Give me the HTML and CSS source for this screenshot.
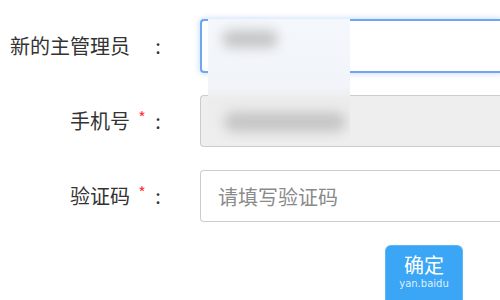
FILE: index.html
```html
<!DOCTYPE html>
<html lang="zh-CN">
<head>
<meta charset="utf-8">
<link rel="stylesheet" href="styles.css">
</head>
<body>
<div class="form">
  <div class="row">
    <div class="label"><span class="text">新的主管理员</span><span class="star"></span><span class="colon">:</span></div>
    <div class="input focused"></div>
  </div>
  <div class="row">
    <div class="label"><span class="text">手机号</span><span class="star">*</span><span class="colon">:</span></div>
    <div class="input disabled"></div>
  </div>
  <div class="row">
    <div class="label"><span class="text">验证码</span><span class="star">*</span><span class="colon">:</span></div>
    <div class="input"><span class="placeholder">请填写验证码</span></div>
  </div>
  <div class="actions">
    <button class="btn"><span class="btn-text">确定</span><span class="mark">yan.baidu</span></button>
  </div>
  <div class="mask">
    <div class="blob blob1"></div>
    <div class="blob blob2"></div>
  </div>
</div>
</body>
</html>
```
FILE: styles.css
```css
html, body {
  margin: 0;
  padding: 0;
  background: #fff;
  overflow: hidden;
  width: 500px;
  height: 300px;
}
body {
  font-family: "Noto Sans CJK SC", "Noto Sans", sans-serif;
  color: #333;
}
.form {
  position: relative;
  padding-top: 19px;
}
.row {
  display: flex;
  align-items: center;
  margin-bottom: 23px;
}
.row:first-child {
  margin-bottom: 22px;
}
.label {
  flex: 0 0 200px;
  width: 200px;
  box-sizing: border-box;
  padding-left: 10px;
  display: flex;
  align-items: center;
  font-size: 20px;
  line-height: 28px;
}
.text {
  width: 120px;
  text-align: right;
}
.star {
  width: 24px;
  text-align: center;
  color: #f33;
  font-size: 16px;
  line-height: 16px;
  align-self: flex-start;
  padding-top: 2px;
}
.colon {
  width: 8px;
  text-align: center;
}
.input {
  flex: 0 0 302px;
  width: 302px;
  height: 52px;
  box-sizing: border-box;
  border: 1px solid #ccc;
  border-right: 0;
  border-radius: 4px 0 0 4px;
  background: #fff;
  display: flex;
  align-items: center;
  padding-left: 17px;
}
.input.focused {
  height: 54px;
  border: 2px solid #6ea6f0;
  border-right: 0;
  box-shadow: 0 0 6px rgba(102, 160, 240, 0.45);
}
.input.disabled {
  background: #eee;
}
.placeholder {
  font-size: 20px;
  color: #8a8a8a;
}
.actions {
  padding-left: 385px;
}
.btn {
  position: relative;
  width: 78px;
  height: 55px;
  border: 1px solid #5fb8f6;
  border-bottom: 0;
  border-radius: 6px 6px 0 0;
  background: #3aa6f5;
  color: #fff;
  font-family: "Noto Sans CJK SC", sans-serif;
  padding: 9px 0 0;
  display: flex;
  flex-direction: column;
  align-items: center;
  justify-content: flex-start;
}
.btn-text {
  font-size: 20px;
  line-height: 20px;
}
.mark {
  font-family: "DejaVu Sans", sans-serif;
  font-size: 10px;
  line-height: 11px;
  color: rgba(255, 255, 255, 0.85);
  margin-top: 3px;
}
.mask {
  position: absolute;
  left: 208px;
  top: 19px;
  width: 142px;
  height: 123px;
  background: linear-gradient(to bottom, #f4f7fb 0%, #f1f5fa 55%, #ececec 65%, #eeeeee 100%);
  overflow: hidden;
}
.blob {
  position: absolute;
  background: #c6c6c6;
  border-radius: 14px;
  filter: blur(6px);
}
.blob1 {
  left: 14px;
  top: 11px;
  width: 56px;
  height: 18px;
}
.blob2 {
  left: 16px;
  top: 93px;
  width: 122px;
  height: 20px;
}
```
